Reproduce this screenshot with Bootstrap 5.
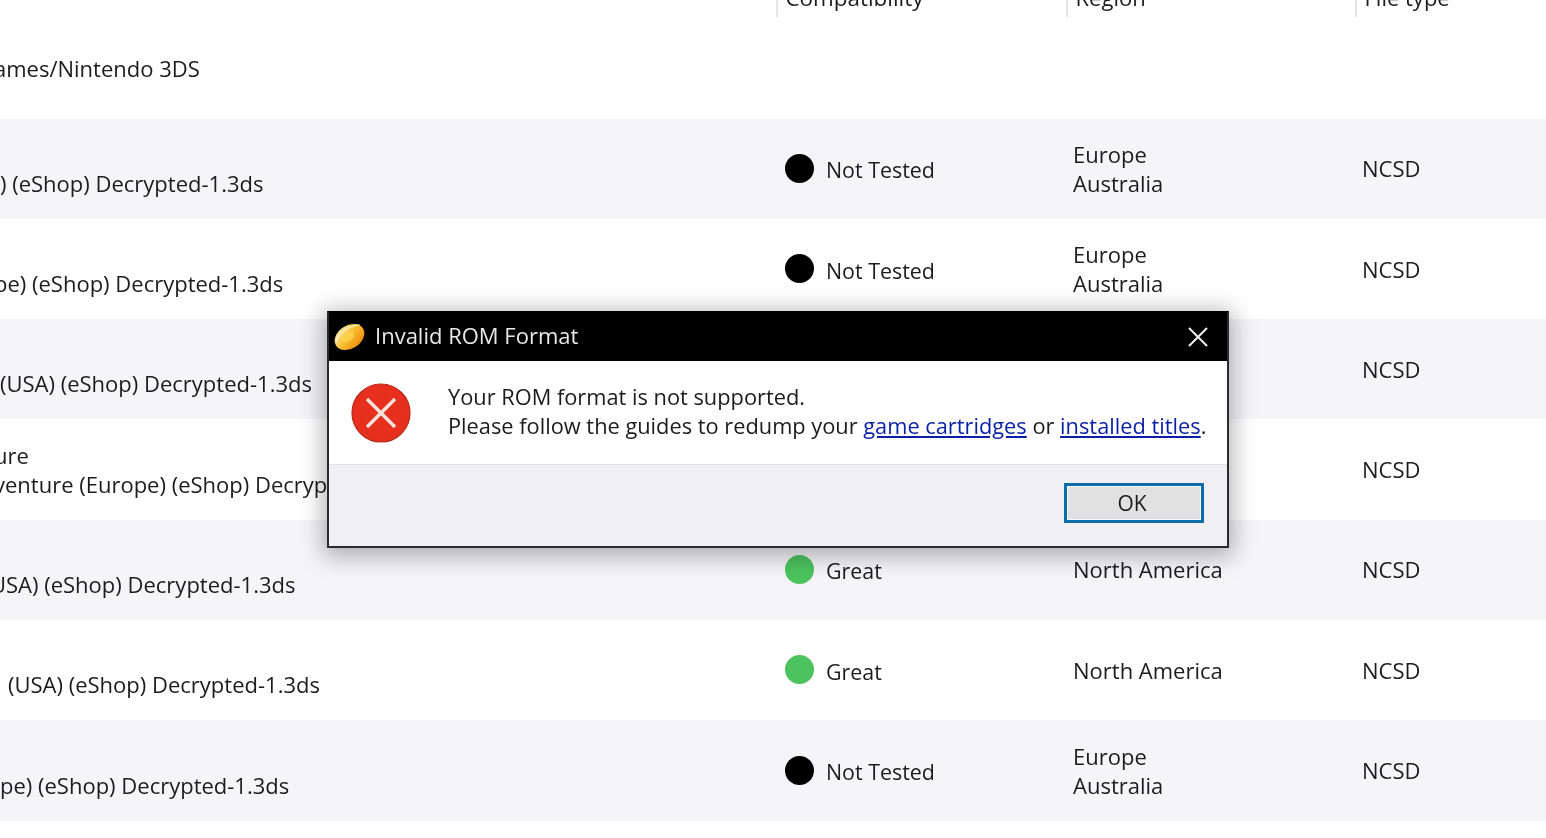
<!DOCTYPE html>
<html lang="en">
<head>
<meta charset="utf-8">
<title>Invalid ROM Format</title>
<link href="https://cdn.jsdelivr.net/npm/bootstrap@5.3.0/dist/css/bootstrap.min.css" rel="stylesheet">
<style>
html,body{height:838px;overflow:hidden;background:#fff}
body{font-family:"Open Sans","Noto Sans",sans-serif;font-size:22px;line-height:29px;color:#1c1c1c;position:relative}
.blur-wrap{filter:blur(.45px)}
.grid-cols{display:grid;grid-template-columns:776px 290px 289px 191px}
.list-head{height:18.3px;overflow:hidden;align-items:start}
.list-head .head-cell{height:17px;border-left:2px solid #e4e4e4;padding-left:7.5px;display:flex;align-items:flex-end;padding-bottom:5px;line-height:29px}
.list-head .head-cell>span{display:block}
.head-wide{font-size:22.4px}
.game-row{height:100.3px;align-items:center}
.game-row.alt{background:#f5f4f7}
.name-cell{white-space:nowrap;overflow:hidden}
.name-cut{margin-left:-6px}
.name-cut-more{margin-left:-10px}
.compat-cell{padding-left:9px;font-size:21.4px;padding-top:2px}
.cell-pad{padding-left:7px}
.shift-in{padding-left:8px}
.dot{width:29px;height:29px;border-radius:50%;flex:none;background:#000;margin-right:12px;margin-top:-3px}
.dot.great{background:#4cc35f}
.rom-dialog{position:absolute;left:327px;top:311px;width:902px;height:237px;border:2px solid #2b2b2b;border-top-color:#000;background:#fff;box-shadow:0 4px 22px 4px rgba(0,0,0,.3);display:flex;flex-direction:column}
.rom-title{height:48px;background:#000;color:#e8e8e8;flex:none;padding-left:4px;padding-right:19px}
.rom-title .caption{margin-left:8px;font-size:22px;margin-top:-3px}
.rom-body{height:104px;flex:none;border-bottom:1px solid #e2e2e2;padding-left:22px;background:#fff}
.rom-msg{margin-left:37px;font-size:21.8px;margin-top:-3px}
.rom-msg a{color:#0a1fa8}
.rom-foot{background:#f0eff1;flex:1;padding-right:23px;padding-top:18px}
.ok-btn{width:140px;height:40px;border:3px solid #0e6cab;background:#e1e1e1;border-radius:0;font-size:21px;padding:0 4px 0 0;line-height:34px;color:#1c1c1c;box-shadow:inset 0 0 0 1px #f4fbff}
</style>
</head>
<body>
<div class="blur-wrap">
  <div class="grid-cols list-head">
    <div></div>
    <div class="head-cell head-wide"><span>Compatibility</span></div>
    <div class="head-cell"><span>Region</span></div>
    <div class="head-cell"><span>File type</span></div>
  </div>

  <div class="grid-cols game-row">
    <div class="name-cell"><div class="name-cut">ames/Nintendo 3DS</div></div>
  </div>

  <div class="grid-cols game-row alt">
    <div class="name-cell">&nbsp;<br>) (eShop) Decrypted-1.3ds</div>
    <div class="d-flex align-items-center compat-cell"><span class="dot"></span>Not Tested</div>
    <div class="cell-pad">Europe<br>Australia</div>
    <div class="cell-pad">NCSD</div>
  </div>
  <div class="grid-cols game-row">
    <div class="name-cell"><div class="name-cut">&nbsp;<br>pe) (eShop) Decrypted-1.3ds</div></div>
    <div class="d-flex align-items-center compat-cell"><span class="dot"></span>Not Tested</div>
    <div class="cell-pad">Europe<br>Australia</div>
    <div class="cell-pad">NCSD</div>
  </div>
  <div class="grid-cols game-row alt">
    <div class="name-cell">&nbsp;<br>(USA) (eShop) Decrypted-1.3ds</div>
    <div class="d-flex align-items-center compat-cell"><span class="dot great"></span>Great</div>
    <div class="cell-pad">North America</div>
    <div class="cell-pad">NCSD</div>
  </div>
  <div class="grid-cols game-row">
    <div class="name-cell"><div class="name-cut">ure<br>venture (Europe) (eShop) Decrypted-1.3ds</div></div>
    <div class="d-flex align-items-center compat-cell"><span class="dot great"></span>Great</div>
    <div class="cell-pad">North America</div>
    <div class="cell-pad">NCSD</div>
  </div>
  <div class="grid-cols game-row alt">
    <div class="name-cell"><div class="name-cut-more">&nbsp;<br>USA) (eShop) Decrypted-1.3ds</div></div>
    <div class="d-flex align-items-center compat-cell"><span class="dot great"></span>Great</div>
    <div class="cell-pad">North America</div>
    <div class="cell-pad">NCSD</div>
  </div>
  <div class="grid-cols game-row">
    <div class="name-cell shift-in">&nbsp;<br>(USA) (eShop) Decrypted-1.3ds</div>
    <div class="d-flex align-items-center compat-cell"><span class="dot great"></span>Great</div>
    <div class="cell-pad">North America</div>
    <div class="cell-pad">NCSD</div>
  </div>
  <div class="grid-cols game-row alt">
    <div class="name-cell">&nbsp;<br>pe) (eShop) Decrypted-1.3ds</div>
    <div class="d-flex align-items-center compat-cell"><span class="dot"></span>Not Tested</div>
    <div class="cell-pad">Europe<br>Australia</div>
    <div class="cell-pad">NCSD</div>
  </div>

  <div class="rom-dialog" role="dialog">
    <div class="rom-title d-flex align-items-center">
      <svg width="34" height="30" viewBox="0 0 34 30" aria-hidden="true">
        <defs>
          <linearGradient id="gold" x1="0.3" y1="0.1" x2="0.75" y2="0.95">
            <stop offset="0" stop-color="#fbe08a"/>
            <stop offset=".45" stop-color="#f9bd2c"/>
            <stop offset="1" stop-color="#ef8d12"/>
          </linearGradient>
        </defs>
        <ellipse cx="16.5" cy="15" rx="16" ry="11.5" transform="rotate(-33 16.5 15)" fill="url(#gold)"/>
        <path d="M3 20C5 12 14 4 26 3" fill="none" stroke="#fff3cf" stroke-width="1.6" stroke-linecap="round" opacity=".85"/>
        <ellipse cx="15" cy="15" rx="7" ry="4" transform="rotate(-33 15 15)" fill="#fdd24a" opacity=".8"/>
      </svg>
      <span class="caption flex-grow-1">Invalid ROM Format</span>
      <svg width="20" height="20" viewBox="0 0 20 20" aria-hidden="true"><path d="M1 1l18 18M19 1L1 19" stroke="#f2f2f2" stroke-width="2" fill="none"/></svg>
    </div>
    <div class="rom-body d-flex align-items-center">
      <svg width="60" height="60" viewBox="0 0 60 60" class="flex-none" aria-hidden="true">
        <circle cx="30" cy="30" r="29" fill="#e6301d" stroke="#b92a1c" stroke-width="1.2"/>
        <path d="M16 16l28 28M44 16L16 44" stroke="#fbe3de" stroke-width="3.4" fill="none"/>
      </svg>
      <div class="rom-msg">Your ROM format is not supported.<br>Please follow the guides to redump your <a href="#">game cartridges</a> or <a href="#">installed titles</a>.</div>
    </div>
    <div class="rom-foot d-flex justify-content-end align-items-start">
      <button type="button" class="btn ok-btn">OK</button>
    </div>
  </div>
</div>
</body>
</html>
